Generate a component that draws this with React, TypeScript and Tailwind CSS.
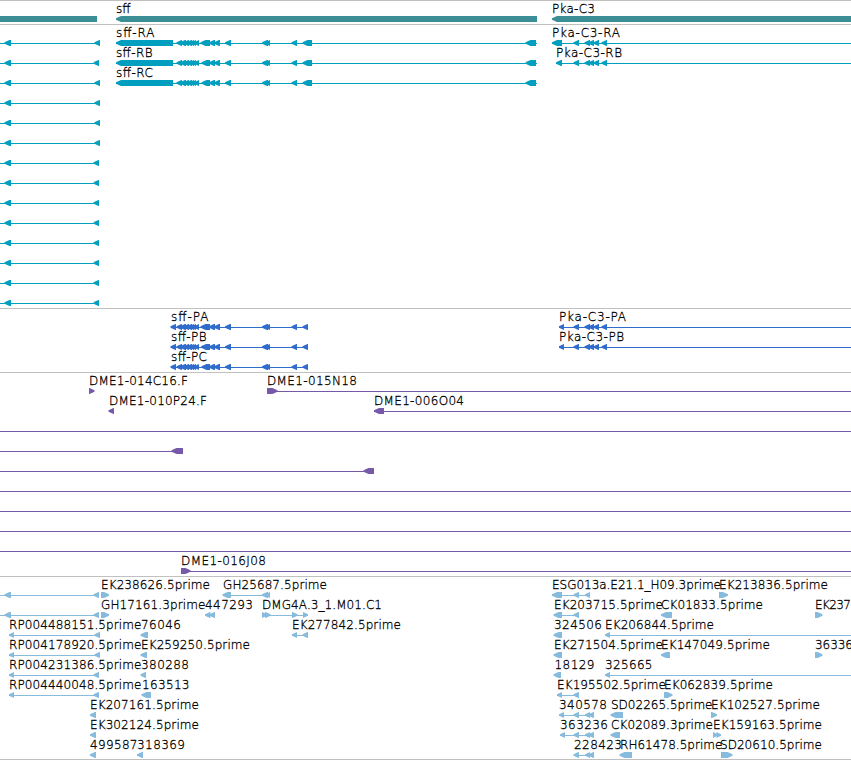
import React from "react";

type Span = [number, number];

type Label = { x: number; w: number; text: string };

type Feature = {
  // arrow blocks, each [start, end]
  blocks: Span[];
  // connecting line behind the blocks
  line?: Span;
  dir?: "left" | "right";
  label?: Label;
};

type TrackData = {
  name: string;
  color: string;
  className: string;
  rows: Feature[][];
};

const WIDTH = 851;

const label = (x: number, w: number, text: string): Label => ({ x, w, text });

const cluster: Span[] = [
  [176.5, 182],
  [180, 186],
  [183.5, 189],
  [186.5, 192],
  [189, 194],
  [191, 196],
  [194, 199],
];

const sffMiddle = (start: number): Span[] => [
  ...cluster,
  [start, 210],
  [209, 215],
  [214, 220],
  [225, 231],
  [262, 268],
  [265, 270],
  [291.5, 297],
];

const pkaMiddle: Span[] = [
  [573.5, 579],
  [584.5, 590],
  [588.5, 594],
  [593.5, 599],
  [601.5, 607],
];

const leftTranscript = (end: number): Feature => ({
  line: [0, end],
  blocks: [
    [4.5, 11],
    [end - 5.5, end],
  ],
});

const sffTranscript = (text: string, w: number, start: number): Feature => ({
  line: [116, 537],
  blocks: [[116, 173], ...sffMiddle(start), [302.5, 312], [525.5, 536]],
  label: label(116, w, text),
});

const sffProtein = (text: string, w: number, start: number): Feature => ({
  line: [171, 308],
  blocks: [[170.5, 176], ...sffMiddle(start), [302.5, 308]],
  label: label(171, w, text),
});

const pka = (x: number, end: number, w: number, text: string): Feature => ({
  line: [x, WIDTH],
  blocks: [[x, end], ...pkaMiddle],
  label: label(x, w, text),
});

const fullLine: Feature = { line: [0, WIDTH], blocks: [] };

// single block with its caption
const single = (
  x: number,
  end: number,
  lx: number,
  w: number,
  text: string,
  dir: "left" | "right" = "left",
): Feature => ({ blocks: [[x, end]], dir, label: label(lx, w, text) });

const rp = (text: string, end: number): Feature => ({
  line: [9, end],
  blocks: [
    [9, 14],
    [end - 5.5, end],
  ],
  label: label(9, 132.5, text),
});

const tracks: TrackData[] = [
  {
    name: "genes",
    color: "#3b8e95",
    className: "pb-0.5",
    rows: [
      [
        { blocks: [[-20, 97]] },
        { blocks: [[116, 537]], label: label(116, 14.5, "sff") },
        { blocks: [[552, 871]], label: label(552, 43, "Pka-C3") },
      ],
    ],
  },
  {
    name: "transcripts",
    color: "#009fbf",
    className: "pb-0.5",
    rows: [
      [
        leftTranscript(100),
        sffTranscript("sff-RA", 38.5, 200.5),
        pka(552, 562, 68, "Pka-C3-RA"),
      ],
      [
        leftTranscript(99),
        sffTranscript("sff-RB", 36.5, 201.5),
        pka(556, 562, 66, "Pka-C3-RB"),
      ],
      [leftTranscript(100), sffTranscript("sff-RC", 37, 201.5)],
      [leftTranscript(100)],
      [leftTranscript(100)],
      [leftTranscript(100)],
      [leftTranscript(99)],
      [leftTranscript(99)],
      [leftTranscript(99)],
      [leftTranscript(99)],
      [leftTranscript(99)],
      [leftTranscript(99)],
      [leftTranscript(99)],
      [leftTranscript(99)],
    ],
  },
  {
    name: "proteins",
    color: "#306ccc",
    className: "pb-0.5",
    rows: [
      [sffProtein("sff-PA", 37.5, 200.5), pka(559, 564, 67, "Pka-C3-PA")],
      [sffProtein("sff-PB", 35.5, 201), pka(559, 564, 65, "Pka-C3-PB")],
      [sffProtein("sff-PC", 36, 201.5)],
    ],
  },
  {
    name: "bacs",
    color: "#7659a8",
    className: "pb-0.5",
    rows: [
      [
        single(89, 94.5, 89, 99, "DME1-014C16.F", "right"),
        {
          line: [267, WIDTH],
          blocks: [[267, 277.5]],
          dir: "right",
          label: label(267, 90, "DME1-015N18"),
        },
      ],
      [
        single(108.5, 114, 109, 98, "DME1-010P24.F"),
        {
          line: [374, WIDTH],
          blocks: [[374, 384]],
          label: label(374, 90, "DME1-006O04"),
        },
      ],
      [fullLine],
      [{ line: [0, 183], blocks: [[171.5, 183]] }],
      [{ line: [0, 374], blocks: [[363.5, 374]] }],
      [fullLine],
      [fullLine],
      [fullLine],
      [fullLine],
      [
        {
          line: [181, WIDTH],
          blocks: [[181, 190.5]],
          dir: "right",
          label: label(181, 85, "DME1-016J08"),
        },
      ],
    ],
  },
  {
    name: "ests",
    color: "#86bbdd",
    className: "pb-px",
    rows: [
      [
        leftTranscript(99),
        single(101, 109, 101, 109, "EK238626.5prime", "right"),
        {
          line: [223, 270],
          blocks: [
            [222.5, 231],
            [262, 268],
            [265, 270],
          ],
          label: label(223, 104, "GH25687.5prime"),
        },
        {
          line: [552, 590],
          blocks: [
            [552, 562],
            [573.5, 579],
            [585, 590],
          ],
          label: label(552, 169, "ESG013a.E21.1_H09.3prime"),
        },
        single(719, 728, 719, 109, "EK213836.5prime", "right"),
      ],
      [
        leftTranscript(99),
        single(101, 109, 101, 104.5, "GH17161.3prime", "right"),
        {
          blocks: [
            [205, 210.5],
            [209.5, 215],
          ],
          label: label(205, 48, "447293"),
        },
        {
          line: [262, 308],
          dir: "right",
          blocks: [
            [262, 267],
            [265, 270.5],
            [292, 297.5],
            [303, 308],
          ],
          label: label(262, 120, "DMG4A.3_1.M01.C1"),
        },
        {
          line: [554, 579],
          blocks: [
            [553.5, 562],
            [573.5, 579],
          ],
          label: label(554, 109, "EK203715.5prime"),
        },
        single(661, 672, 661, 102, "CK01833.5prime"),
        single(815, 822.5, 815, 36, "EK237", "right"),
      ],
      [
        rp("RP004488151.5prime", 100),
        single(140.5, 148, 141, 40, "76046"),
        {
          line: [292, 308],
          blocks: [
            [292, 297],
            [302.5, 308],
          ],
          label: label(292, 109, "EK277842.5prime"),
        },
        single(553.5, 562, 554, 48, "324506"),
        {
          line: [605, WIDTH],
          blocks: [[605, 610]],
          label: label(605, 109, "EK206844.5prime"),
        },
      ],
      [
        rp("RP004178920.5prime", 100),
        single(140.5, 147, 141, 109, "EK259250.5prime"),
        single(553.5, 562, 554, 109, "EK271504.5prime"),
        single(661, 670, 661, 109, "EK147049.5prime"),
        single(815, 822.5, 815, 38, "36336", "right"),
      ],
      [
        rp("RP004231386.5prime", 99),
        single(140.5, 146, 141, 48, "380288"),
        single(553.5, 561, 554.5, 40, "18129"),
        {
          line: [605, WIDTH],
          blocks: [[605, 610]],
          label: label(605, 47.5, "325665"),
        },
      ],
      [
        rp("RP004440048.5prime", 99),
        single(141.5, 151, 142, 47.5, "163513"),
        {
          line: [557, 579],
          blocks: [
            [557, 562],
            [573.5, 579],
          ],
          label: label(557, 109, "EK195502.5prime"),
        },
        single(664, 672.5, 664, 109, "EK062839.5prime", "right"),
      ],
      [
        single(90, 96, 90, 109, "EK207161.5prime"),
        {
          line: [559, 594],
          blocks: [
            [559, 564],
            [573.5, 579],
            [585, 590],
            [588.5, 594],
          ],
          label: label(559, 48, "340578"),
        },
        single(610.5, 623, 611, 101.5, "SD02265.5prime"),
        single(711, 717, 711, 109, "EK102527.5prime", "right"),
      ],
      [
        single(90, 96, 90, 109, "EK302124.5prime"),
        {
          line: [560, 594],
          blocks: [
            [560, 565],
            [573.5, 579],
            [585, 590],
            [588.5, 594],
          ],
          label: label(560, 48, "363236"),
        },
        single(610.5, 620, 611, 102, "CK02089.3prime"),
        {
          blocks: [
            [713, 717.5],
            [716.5, 721],
          ],
          dir: "right",
          label: label(713, 109, "EK159163.5prime"),
        },
      ],
      [
        single(90, 96, 90, 47.5, "499587"),
        single(137, 143, 137, 48, "318369"),
        {
          line: [574, 594],
          blocks: [
            [573.5, 579],
            [585, 590],
            [588.5, 594],
          ],
          label: label(574, 48, "228423"),
        },
        single(619.5, 632, 620, 102.5, "RH61478.5prime"),
        single(721, 732.5, 720, 102, "SD20610.5prime", "right"),
      ],
    ],
  },
];

const arrow = ([x0, x1]: Span, dir: "left" | "right") => {
  const tip = Math.min(5, x1 - x0);
  if (dir === "left") {
    return `${x0},17.8 ${x0},16.2 ${x0 + tip},14 ${x1},14 ${x1},20 ${x0 + tip},20`;
  }
  return `${x1},17.8 ${x1},16.2 ${x1 - tip},14 ${x0},14 ${x0},20 ${x1 - tip},20`;
};

const Row = ({ features, color }: { features: Feature[]; color: string }) => (
  <svg width={WIDTH} height={20} className="block shrink-0" fill={color}>
    {features.map(({ line, blocks, dir = "left", label: caption }, i) => (
      <g key={i}>
        {line && <rect x={line[0]} y={17} width={line[1] - line[0]} height={1} />}
        {blocks.map((b, j) => (
          <polygon key={j} points={arrow(b, dir)} />
        ))}
        {caption && (
          <text
            x={caption.x}
            y={11}
            textLength={caption.w}
            className="fill-black stroke-black stroke-[0.3px] font-['DejaVu_Sans',sans-serif] text-[12px] font-extralight"
          >
            {caption.text}
          </text>
        )}
      </g>
    ))}
  </svg>
);

const App = () => {
  return (
    <main className="flex h-[760px] w-[851px] flex-col overflow-hidden bg-white">
      {tracks.map((track) => (
        <section
          key={track.name}
          className={`flex flex-col border-t border-[#c0c0c0] pt-px ${track.className}`}
        >
          {track.rows.map((features, i) => (
            <Row key={i} features={features} color={track.color} />
          ))}
        </section>
      ))}
      <div className="h-px shrink-0 bg-[#c0c0c0]" />
    </main>
  );
};

export default App;
